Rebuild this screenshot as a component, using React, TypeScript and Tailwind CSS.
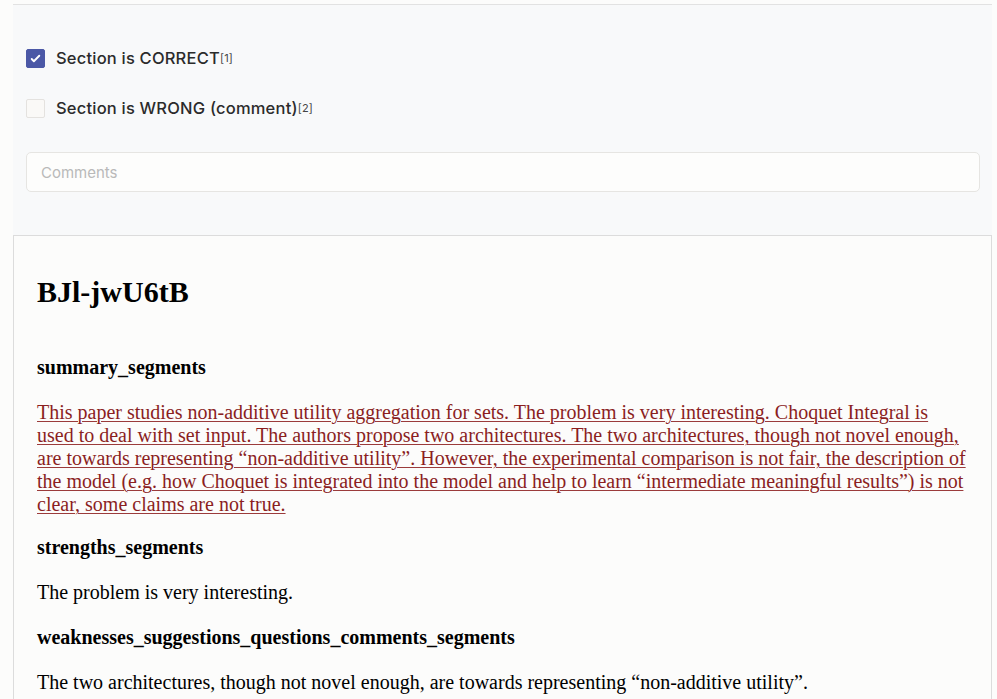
import React from 'react';

const SUMMARY =
  'This paper studies non-additive utility aggregation for sets. The problem is very interesting. Choquet Integral is used to deal with set input. The authors propose two architectures. The two architectures, though not novel enough, are towards representing “non-additive utility”. However, the experimental comparison is not fair, the description of the model (e.g. how Choquet is integrated into the model and help to learn “intermediate meaningful results”) is not clear, some claims are not true.';

const CheckRow: React.FC<{ checked: boolean; label: string; note: string }> = ({ checked, label, note }) => (
  <label className="flex items-center gap-[11px] h-[19px]">
    <span
      className={`w-[19px] h-[19px] rounded-[2px] flex items-center justify-center shrink-0 ${
        checked ? 'bg-[#4b58a6] border border-[#4b58a6]' : 'bg-[#faf9f7] border border-[#e4e2df]'
      }`}
    >
      {checked && (
        <svg className="w-[13px] h-[13px] text-white" fill="none" stroke="currentColor" viewBox="0 0 24 24">
          <path strokeLinecap="round" strokeLinejoin="round" strokeWidth="3.5" d="M5 13l4 4L19 7" />
        </svg>
      )}
    </span>
    <span className="text-[16.5px] font-medium text-[#2b2b2b] tracking-[0.2px]">
      {label}
      <sup className="text-[11px] font-normal text-[#444] relative -top-[2px]">{note}</sup>
    </span>
  </label>
);

export default function App() {
  return (
    <div className="min-h-screen bg-[#fcfcfb] pt-[4px] pl-[13px] pr-[5px] overflow-hidden">
      <div className="bg-[#f8f9fa] border-t border-[#e2e2e2] pt-[44px] pb-[43px] pl-[13px] pr-[12px] font-['Inter',sans-serif]">
        <div className="flex flex-col gap-[31px]">
          <CheckRow checked label="Section is CORRECT" note="[1]" />
          <CheckRow checked={false} label="Section is WRONG (comment)" note="[2]" />
        </div>
        <input
          placeholder="Comments"
          className="mt-[34px] w-full h-[40px] rounded-[5px] border border-[#e6e5e2] bg-[#fdfdfc] px-[14px] text-[15px] placeholder:text-[#b9b9b9] outline-none"
        />
      </div>
      <div className="border border-[#dcdcdc] bg-[#fcfcfb] px-[23px] pt-[39px] pb-[20px] font-['Liberation_Serif','Times_New_Roman',serif] text-black">
        <h1 className="text-[30px] font-bold leading-[33px]">BJl-jwU6tB</h1>
        <h4 className="mt-[48px] text-[20px] font-bold leading-[23px]">summary_segments</h4>
        <p className="mt-[22px] text-[20px] leading-[23px] text-[#8b1f1f] underline decoration-1 decoration-[#9b3b3b] underline-offset-[2px]">
          {SUMMARY}
        </p>
        <h4 className="mt-[20px] text-[20px] font-bold leading-[23px]">strengths_segments</h4>
        <p className="mt-[22px] text-[20px] leading-[23px]">The problem is very interesting.</p>
        <h4 className="mt-[22px] text-[20px] font-bold leading-[23px]">weaknesses_suggestions_questions_comments_segments</h4>
        <p className="mt-[22px] text-[20px] leading-[23px]">
          The two architectures, though not novel enough, are towards representing “non-additive utility”.
        </p>
      </div>
    </div>
  );
}
